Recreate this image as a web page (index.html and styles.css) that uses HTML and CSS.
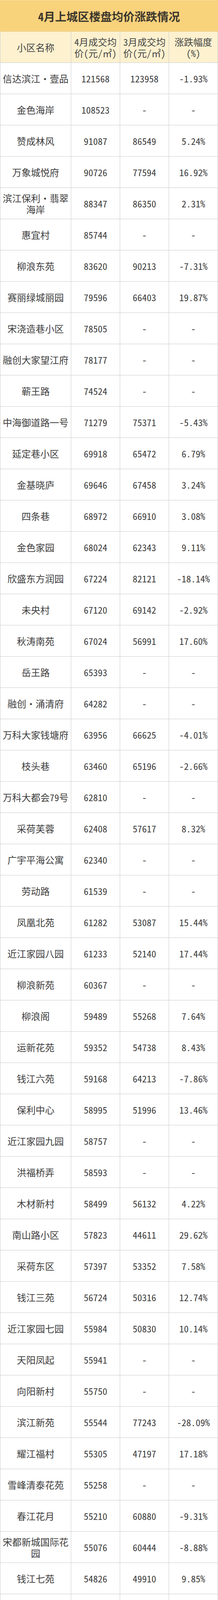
FILE: index.html
```html
<!DOCTYPE html>
<html lang="zh-CN">
<head>
<meta charset="utf-8">
<title>4月上城区楼盘均价涨跌情况</title>
<link rel="stylesheet" href="styles.css">
</head>
<body>
<div class="sheet">
  <div class="title">4月上城区楼盘均价涨跌情况</div>
  <div class="grid">
    <div class="hd name">小区名称</div>
    <div class="hd hw">4月成交均价(元/㎡)</div>
    <div class="hd hw">3月成交均价(元/㎡)</div>
    <div class="hd hw">涨跌幅度(%)</div>

    <div class="c name">信达滨江・壹品</div><div class="c hw">121568</div><div class="c hw">123958</div><div class="c hw">-1.93%</div>
    <div class="c name">金色海岸</div><div class="c hw">108523</div><div class="c hw">-</div><div class="c hw">-</div>
    <div class="c name">赞成林风</div><div class="c hw">91087</div><div class="c hw">86549</div><div class="c hw">5.24%</div>
    <div class="c name">万象城悦府</div><div class="c hw">90726</div><div class="c hw">77594</div><div class="c hw">16.92%</div>
    <div class="c name">滨江保利・翡翠海岸</div><div class="c hw">88347</div><div class="c hw">86350</div><div class="c hw">2.31%</div>
    <div class="c name">惠宜村</div><div class="c hw">85744</div><div class="c hw">-</div><div class="c hw">-</div>
    <div class="c name">柳浪东苑</div><div class="c hw">83620</div><div class="c hw">90213</div><div class="c hw">-7.31%</div>
    <div class="c name">赛丽绿城丽园</div><div class="c hw">79596</div><div class="c hw">66403</div><div class="c hw">19.87%</div>
    <div class="c name">宋浇造巷小区</div><div class="c hw">78505</div><div class="c hw">-</div><div class="c hw">-</div>
    <div class="c name">融创大家望江府</div><div class="c hw">78177</div><div class="c hw">-</div><div class="c hw">-</div>
    <div class="c name">蕲王路</div><div class="c hw">74524</div><div class="c hw">-</div><div class="c hw">-</div>
    <div class="c name">中海御道路一号</div><div class="c hw">71279</div><div class="c hw">75371</div><div class="c hw">-5.43%</div>
    <div class="c name">延定巷小区</div><div class="c hw">69918</div><div class="c hw">65472</div><div class="c hw">6.79%</div>
    <div class="c name">金基晓庐</div><div class="c hw">69646</div><div class="c hw">67458</div><div class="c hw">3.24%</div>
    <div class="c name">四条巷</div><div class="c hw">68972</div><div class="c hw">66910</div><div class="c hw">3.08%</div>
    <div class="c name">金色家园</div><div class="c hw">68024</div><div class="c hw">62343</div><div class="c hw">9.11%</div>
    <div class="c name">欣盛东方润园</div><div class="c hw">67224</div><div class="c hw">82121</div><div class="c hw">-18.14%</div>
    <div class="c name">未央村</div><div class="c hw">67120</div><div class="c hw">69142</div><div class="c hw">-2.92%</div>
    <div class="c name">秋涛南苑</div><div class="c hw">67024</div><div class="c hw">56991</div><div class="c hw">17.60%</div>
    <div class="c name">岳王路</div><div class="c hw">65393</div><div class="c hw">-</div><div class="c hw">-</div>
    <div class="c name">融创・涌清府</div><div class="c hw">64282</div><div class="c hw">-</div><div class="c hw">-</div>
    <div class="c name">万科大家钱塘府</div><div class="c hw">63956</div><div class="c hw">66625</div><div class="c hw">-4.01%</div>
    <div class="c name">枝头巷</div><div class="c hw">63460</div><div class="c hw">65196</div><div class="c hw">-2.66%</div>
    <div class="c name">万科大都会<span class="hw">79</span>号</div><div class="c hw">62810</div><div class="c hw">-</div><div class="c hw">-</div>
    <div class="c name">采荷芙蓉</div><div class="c hw">62408</div><div class="c hw">57617</div><div class="c hw">8.32%</div>
    <div class="c name">广宇平海公寓</div><div class="c hw">62340</div><div class="c hw">-</div><div class="c hw">-</div>
    <div class="c name">劳动路</div><div class="c hw">61539</div><div class="c hw">-</div><div class="c hw">-</div>
    <div class="c name">凤凰北苑</div><div class="c hw">61282</div><div class="c hw">53087</div><div class="c hw">15.44%</div>
    <div class="c name">近江家园八园</div><div class="c hw">61233</div><div class="c hw">52140</div><div class="c hw">17.44%</div>
    <div class="c name">柳浪新苑</div><div class="c hw">60367</div><div class="c hw">-</div><div class="c hw">-</div>
    <div class="c name">柳浪阁</div><div class="c hw">59489</div><div class="c hw">55268</div><div class="c hw">7.64%</div>
    <div class="c name">运新花苑</div><div class="c hw">59352</div><div class="c hw">54738</div><div class="c hw">8.43%</div>
    <div class="c name">钱江六苑</div><div class="c hw">59168</div><div class="c hw">64213</div><div class="c hw">-7.86%</div>
    <div class="c name">保利中心</div><div class="c hw">58995</div><div class="c hw">51996</div><div class="c hw">13.46%</div>
    <div class="c name">近江家园九园</div><div class="c hw">58757</div><div class="c hw">-</div><div class="c hw">-</div>
    <div class="c name">洪福桥弄</div><div class="c hw">58593</div><div class="c hw">-</div><div class="c hw">-</div>
    <div class="c name">木材新村</div><div class="c hw">58499</div><div class="c hw">56132</div><div class="c hw">4.22%</div>
    <div class="c name">南山路小区</div><div class="c hw">57823</div><div class="c hw">44611</div><div class="c hw">29.62%</div>
    <div class="c name">采荷东区</div><div class="c hw">57397</div><div class="c hw">53352</div><div class="c hw">7.58%</div>
    <div class="c name">钱江三苑</div><div class="c hw">56724</div><div class="c hw">50316</div><div class="c hw">12.74%</div>
    <div class="c name">近江家园七园</div><div class="c hw">55984</div><div class="c hw">50830</div><div class="c hw">10.14%</div>
    <div class="c name">天阳凤起</div><div class="c hw">55941</div><div class="c hw">-</div><div class="c hw">-</div>
    <div class="c name">向阳新村</div><div class="c hw">55750</div><div class="c hw">-</div><div class="c hw">-</div>
    <div class="c name">滨江新苑</div><div class="c hw">55544</div><div class="c hw">77243</div><div class="c hw">-28.09%</div>
    <div class="c name">耀江福村</div><div class="c hw">55305</div><div class="c hw">47197</div><div class="c hw">17.18%</div>
    <div class="c name">雪峰清泰花苑</div><div class="c hw">55258</div><div class="c hw">-</div><div class="c hw">-</div>
    <div class="c name">春江花月</div><div class="c hw">55210</div><div class="c hw">60880</div><div class="c hw">-9.31%</div>
    <div class="c name">宋都新城国际花园</div><div class="c hw">55076</div><div class="c hw">60444</div><div class="c hw">-8.88%</div>
    <div class="c name">钱江七苑</div><div class="c hw">54826</div><div class="c hw">49910</div><div class="c hw">9.85%</div>
    <div class="c name">水澄花园南苑</div><div class="c hw">54161</div><div class="c hw">-</div><div class="c hw">-</div>
    <div class="c name">光复路</div><div class="c hw">53987</div><div class="c hw">57222</div><div class="c hw">-5.65%</div>
    <div class="c name">清波新村</div><div class="c hw">53952</div><div class="c hw">42700</div><div class="c hw">26.35%</div>
    <div class="c name">和谐嘉园东苑</div><div class="c hw">53855</div><div class="c hw">53954</div><div class="c hw">-0.18%</div>
    <div class="c name">采荷翠柳</div><div class="c hw">53697</div><div class="c hw">46170</div><div class="c hw">16.30%</div>
    <div class="c name">景云村小区</div><div class="c hw">53628</div><div class="c hw">-</div><div class="c hw">-</div>
    <div class="c name">采荷青莼</div><div class="c hw">53413</div><div class="c hw">56309</div><div class="c hw">-5.14%</div>
    <div class="c name">钱江时代公寓</div><div class="c hw">53165</div><div class="c hw">50623</div><div class="c hw">5.02%</div>
    <div class="c name">采荷洁莲</div><div class="c hw">53110</div><div class="c hw">53905</div><div class="c hw">-1.47%</div>
    <div class="c name">新城坊</div><div class="c hw">52929</div><div class="c hw">-</div><div class="c hw">-</div>
    <div class="c name">耀江广厦公寓</div><div class="c hw">52884</div><div class="c hw">-</div><div class="c hw">-</div>
    <div class="c name">东方御府</div><div class="c hw">52791</div><div class="c hw">53382</div><div class="c hw">-1.11%</div>
    <div class="c name">柴校坊小区</div><div class="c hw">51765</div><div class="c hw">52479</div><div class="c hw">-1.36%</div>
    <div class="c name">赞成太和广场</div><div class="c hw">51670</div><div class="c hw">41107</div><div class="c hw">25.70%</div>
    <div class="c name">世茂天宸・天玑</div><div class="c hw">51606</div><div class="c hw">61897</div><div class="c hw">-16.63%</div>
    <div class="c name">采荷青荷</div><div class="c hw">51227</div><div class="c hw">-</div><div class="c hw">-</div>
    <div class="c name">万安城市花园东苑</div><div class="c hw">51061</div><div class="c hw">41494</div><div class="c hw">23.06%</div>
    <div class="c name">直饮马井巷小区</div><div class="c hw">50856</div><div class="c hw">-</div><div class="c hw">-</div>
    <div class="c name">尚农里小区</div><div class="c hw">50663</div><div class="c hw">43204</div><div class="c hw">17.26%</div>
    <div class="c name">夕照新村</div><div class="c hw">50600</div><div class="c hw">-</div><div class="c hw">-</div>
    <div class="c name">中山中路小区</div><div class="c hw">50411</div><div class="c hw">-</div><div class="c hw">-</div>
    <div class="c name">望江家园东园</div><div class="c hw">50224</div><div class="c hw">52675</div><div class="c hw">-4.65%</div>
    <div class="c name">瑞丰格林苑</div><div class="c hw">50199</div><div class="c hw">-</div><div class="c hw">-</div>
    <div class="c name">世纪坊</div><div class="c hw">50131</div><div class="c hw">48095</div><div class="c hw">4.23%</div>
    <div class="c name">和谐嘉园北苑</div><div class="c hw">50048</div><div class="c hw">46163</div><div class="c hw">8.42%</div>
    <div class="c name">商教苑</div><div class="c hw">49961</div><div class="c hw">52991</div><div class="c hw">-5.72%</div>
    <div class="c name">花圃铁路新村</div><div class="c hw">49746</div><div class="c hw">53869</div><div class="c hw">-7.65%</div>
    <div class="c name">十三湾巷小区</div><div class="c hw">49607</div><div class="c hw">45541</div><div class="c hw">8.93%</div>
    <div class="c name">恒丰坊</div><div class="c hw">49139</div><div class="c hw">46653</div><div class="c hw">5.33%</div>
    <div class="c name">采荷二区</div><div class="c hw">49002</div><div class="c hw">55972</div><div class="c hw">-12.45%</div>
    <div class="c name">定安苑</div><div class="c hw">48993</div><div class="c hw">51242</div><div class="c hw">-4.39%</div>
    <div class="c name">仁和路</div><div class="c hw">48667</div><div class="c hw">59221</div><div class="c hw">-17.82%</div>
    <div class="c name">南肖埠文景苑</div><div class="c hw">48283</div><div class="c hw">-</div><div class="c hw">-</div>
    <div class="c name">小营巷民居</div><div class="c hw">48068</div><div class="c hw">-</div><div class="c hw">-</div>
    <div class="c name">广景苑</div><div class="c hw">47905</div><div class="c hw">45284</div><div class="c hw">5.79%</div>
    <div class="c name">昆仑天籁（排屋）</div><div class="c hw">47699</div><div class="c hw">-</div><div class="c hw">-</div>
    <div class="c name">绿城杨柳郡</div><div class="c hw">47627</div><div class="c hw">50185</div><div class="c hw">-5.10%</div>
    <div class="c name">凤山花苑</div><div class="c hw">47387</div><div class="c hw">43937</div><div class="c hw">7.85%</div>
    <div class="c name">观音塘怡静坊</div><div class="c hw">47324</div><div class="c hw">-</div><div class="c hw">-</div>
    <div class="c name">采荷紫藕</div><div class="c hw">47226</div><div class="c hw">-</div><div class="c hw">-</div>
    <div class="c name">临江风帆公寓</div><div class="c hw">46929</div><div class="c hw">-</div><div class="c hw">-</div>
    <div class="c name">开元路小区</div><div class="c hw">46572</div><div class="c hw">-</div><div class="c hw">-</div>
  </div>
</div>
</body>
</html>
```

FILE: styles.css
```css
html, body {
  margin: 0;
  padding: 0;
  background: #ffffff;
}

body {
  width: 557px;
  font-family: "Noto Sans CJK SC", "Noto Sans", sans-serif;
  color: #3e3e3e;
}

.sheet {
  width: 557px;
  border-top: 1px solid #fbe3a6;
}

.title {
  height: 80px;
  box-sizing: border-box;
  background: #f9d27c;
  border-bottom: 1px solid #e6c98a;
  display: flex;
  align-items: center;
  justify-content: center;
  font-size: 29px;
  font-weight: 700;
  color: #3b362c;
  font-feature-settings: "hwid" 1;
}

.grid {
  display: grid;
  grid-template-columns: 181px 125px 125px 125px;
  grid-auto-rows: 80px;
  border-left: 1px solid #cbcbcb;
}

.hd,
.c {
  box-sizing: border-box;
  border-right: 1px solid #cbcbcb;
  border-bottom: 1px solid #cbcbcb;
  display: flex;
  align-items: center;
  justify-content: center;
  text-align: center;
  padding: 0 4px;
  font-size: 24px;
  line-height: 29px;
}

.hd {
  background: #fdf1cf;
  color: #454545;
}

.c {
  background: #ffffff;
}

.hw {
  font-feature-settings: "hwid" 1;
}
```
